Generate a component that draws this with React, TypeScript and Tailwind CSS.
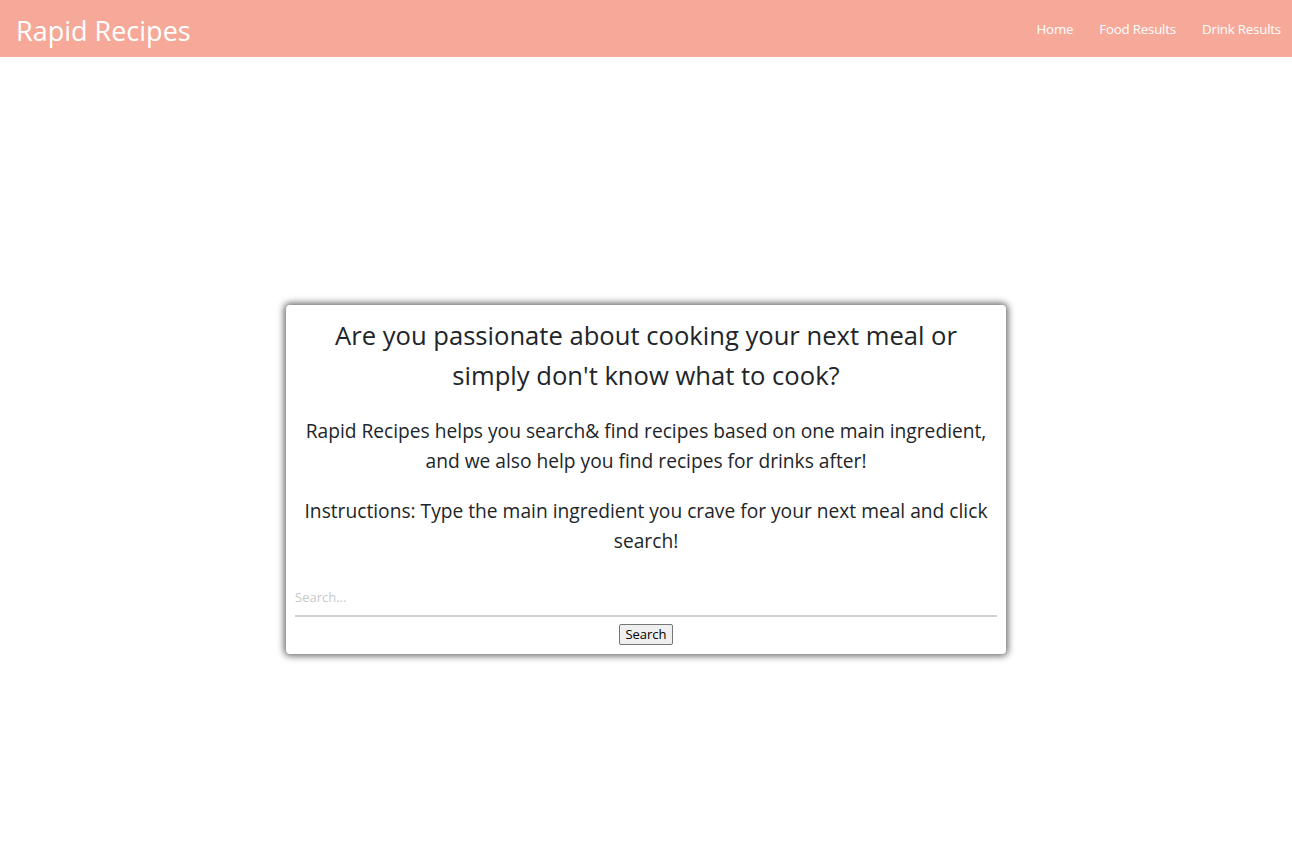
export default function App() {
  return (
    <div className="min-h-screen bg-white" style={{ fontFamily: '"Open Sans", sans-serif' }}>
      {/* Navbar */}
      <nav className="h-[57px] bg-[#f6a998] flex items-center justify-between pl-4 pr-[11px]">
        <a href="#" className="text-white text-[27px] leading-none pt-[3px]">
          Rapid Recipes
        </a>
        <ul className="flex items-center gap-[26px] pt-[2px] text-white text-[13.3px] tracking-[-0.2px]">
          <li><a href="#">Home</a></li>
          <li><a href="#">Food Results</a></li>
          <li><a href="#">Drink Results</a></li>
        </ul>
      </nav>

      {/* Card */}
      <div className="mx-auto mt-[248px] w-[720px] bg-white rounded-[4px] shadow-[0_0_7px_2px_rgba(0,0,0,0.6)] px-[9px] pt-[11px] pb-[9px] text-center text-[#212529]">
        <h3 className="text-[25.6px] leading-[40px] mb-5 px-[6px]">
          Are you passionate about cooking your next meal or simply don't know what to cook?
        </h3>
        <p className="text-[19.2px] leading-[30px] mb-5">
          Rapid Recipes helps you search&amp; find recipes based on one main ingredient, and we also help you find recipes for drinks after!
        </p>
        <p className="text-[19.2px] leading-[30px]">
          Instructions: Type the main ingredient you crave for your next meal and click search!
        </p>
        <input
          type="text"
          placeholder="Search..."
          className="mt-5 block w-full h-[41px] border-b-2 border-[#d1d1d1] text-[13px] outline-none placeholder:text-[#c8c8c8] pt-[2px]"
        />
        <button className="mt-[7px] border border-[#767676] bg-[#efefef] rounded-[2px] px-[5px] h-[21px] text-[13px] leading-none text-black">
          Search
        </button>
      </div>
    </div>
  );
}
